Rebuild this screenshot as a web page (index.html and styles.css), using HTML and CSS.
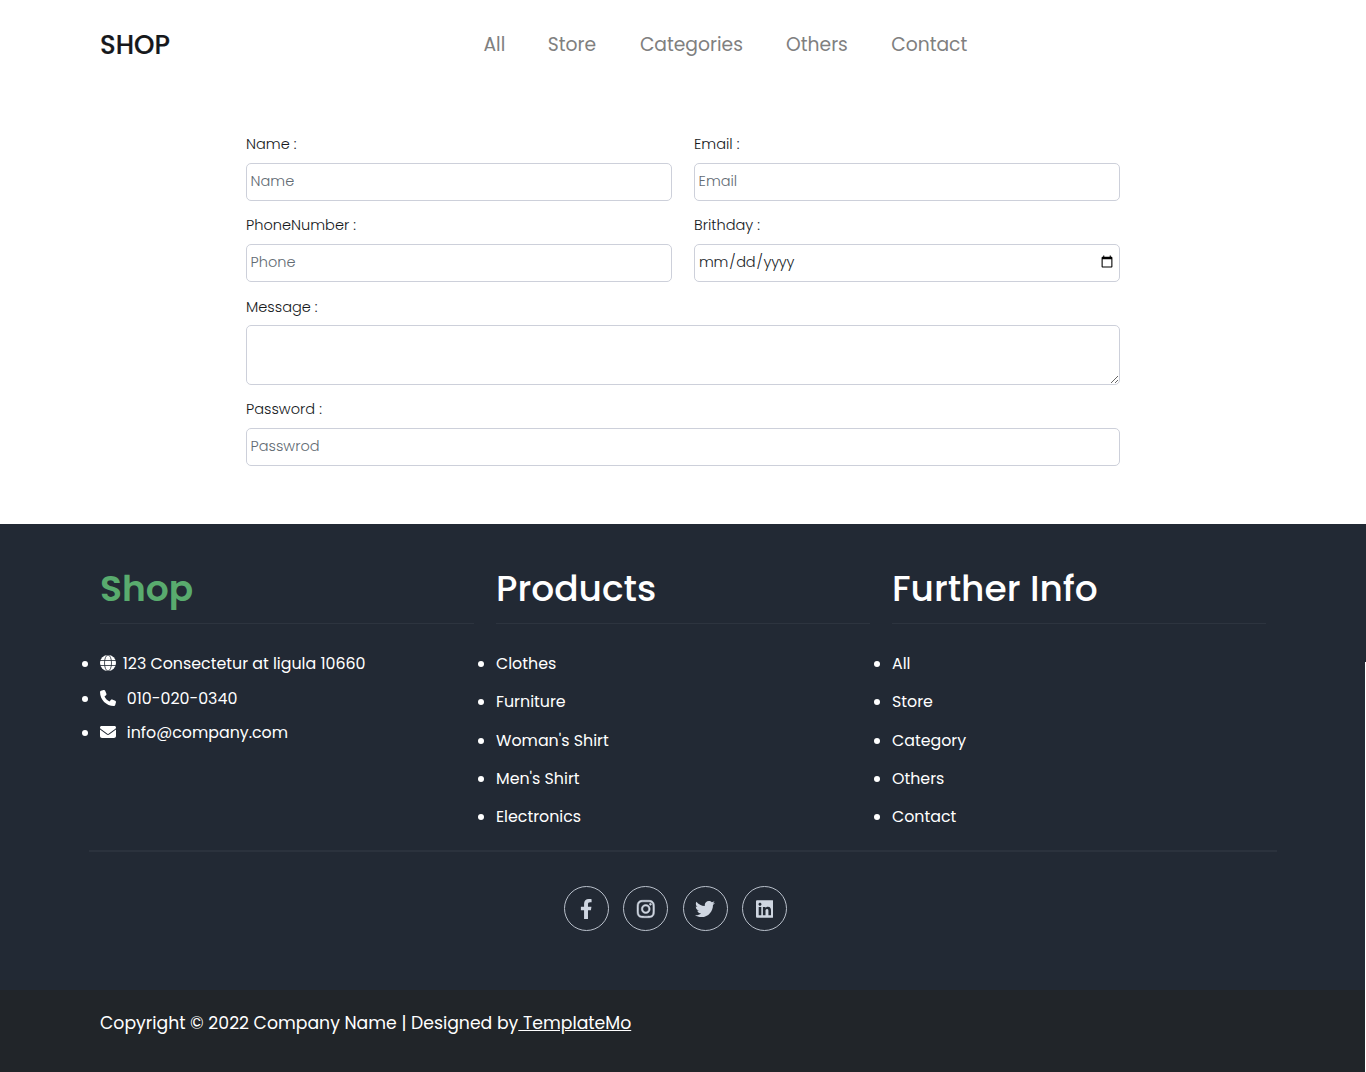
FILE: index.html
```html
<!DOCTYPE html>
<html lang="en">
<head>
<meta charset="utf-8">
<title>Shop - Contact</title>
<link rel="stylesheet" href="styles.css">
</head>
<body>
<header class="header">
  <a class="brand">SHOP</a>
  <nav class="nav"><a class="nav-all">All</a><a class="nav-store">Store</a><a class="nav-categories">Categories</a><a class="nav-others">Others</a><a class="nav-contact">Contact</a></nav>
</header>
<main>
  <form class="form">
    <div class="field"><label for="name">Name :</label><input id="name" type="text" placeholder="Name"></div>
    <div class="field"><label for="email">Email :</label><input id="email" type="email" placeholder="Email"></div>
    <div class="field"><label for="phone">PhoneNumber :</label><input id="phone" type="text" placeholder="Phone"></div>
    <div class="field"><label for="date">Brithday :</label><input id="date" type="date"></div>
    <div class="field wide message"><label for="message">Message :</label><textarea id="message"></textarea></div>
    <div class="field wide"><label for="password">Password :</label><input id="password" type="password" placeholder="Passwrod"></div>
  </form>
</main>
<footer class="footer">
  <div class="columns">
    <section class="column">
      <h2 class="title green">Shop</h2>
      <ul class="contact">
        <li><svg class="icon" viewBox="0 0 16 16"><circle cx="8" cy="8" r="8" fill="#fff"/><path d="M0 5.500h16M0 10.500h16" fill="none" stroke="#222934" stroke-width=".8"/><ellipse cx="8" cy="8" rx="3.500" ry="8" fill="none" stroke="#222934" stroke-width=".8"/></svg><span class="address">123 Consectetur at ligula 10660</span></li>
        <li><svg class="icon" viewBox="0 0 512 512"><path fill="#fff" d="M164.900 24.600c-7.700-18.600-28-28.500-47.400-23.200l-88 24C12.100 30.200 0 46 0 64c0 247.400 200.600 448 448 448 18 0 33.800-12.100 38.600-29.500l24-88c5.300-19.400-4.600-39.700-23.200-47.400l-96-40c-16.300-6.800-35.200-2.100-46.300 11.600L304.700 368C234.300 334.700 177.300 277.700 144 207.300L193.300 167c13.700-11.200 18.400-30 11.600-46.300l-40-96z"/></svg><span class="phone">010-020-0340</span></li>
        <li><svg class="icon" viewBox="0 0 512 512"><path fill="#fff" d="M48 64C21.500 64 0 85.500 0 112c0 15.100 7.100 29.300 19.200 38.400L236.800 313.600c11.400 8.500 27 8.500 38.400 0L492.800 150.400c12.100-9.100 19.200-23.300 19.200-38.400 0-26.500-21.500-48-48-48H48zM0 176v208c0 35.300 28.700 64 64 64h384c35.300 0 64-28.700 64-64V176L294.400 339.200c-22.800 17.100-54 17.100-76.800 0L0 176z"/></svg><span class="mail">info@company.com</span></li>
      </ul>
    </section>
    <section class="column">
      <h2 class="title products">Products</h2>
      <ul class="links"><li>Clothes</li><li>Furniture</li><li>Woman's Shirt</li><li>Men's Shirt</li><li>Electronics</li></ul>
    </section>
    <section class="column">
      <h2 class="title info">Further Info</h2>
      <ul class="links"><li>All</li><li>Store</li><li>Category</li><li>Others</li><li>Contact</li></ul>
    </section>
  </div>
  <div class="divider"></div>
  <div class="social">
    <a><svg viewBox="0 0 320 512"><path d="M279.140 288l14.220-92.660h-88.910v-60.130c0-25.350 12.420-50.060 52.240-50.060h40.420V6.260S260.430 0 225.360 0c-73.220 0-121.080 44.380-121.080 124.720v70.620H22.890V288h81.390v224h100.170V288z"/></svg></a>
    <a><svg class="instagram" viewBox="0 0 448 512"><path d="M224.100 141c-63.600 0-114.900 51.300-114.900 114.900s51.300 114.900 114.900 114.900S339 319.500 339 255.900 287.700 141 224.100 141zm0 189.600c-41.100 0-74.700-33.500-74.700-74.700s33.500-74.700 74.700-74.700 74.700 33.500 74.700 74.700-33.600 74.700-74.700 74.700zm146.400-194.300c0 14.900-12 26.800-26.800 26.800-14.900 0-26.800-12-26.800-26.800s12-26.800 26.800-26.800 26.800 12 26.800 26.800zm76.100 27.200c-1.700-35.900-9.900-67.700-36.200-93.900-26.200-26.200-58-34.400-93.900-36.200-37-2.100-147.900-2.100-184.900 0-35.800 1.700-67.600 9.900-93.900 36.100s-34.400 58-36.200 93.900c-2.100 37-2.100 147.900 0 184.900 1.700 35.900 9.900 67.700 36.200 93.900s58 34.400 93.900 36.200c37 2.100 147.900 2.100 184.900 0 35.900-1.700 67.700-9.900 93.900-36.200 26.200-26.200 34.400-58 36.200-93.900 2.100-37 2.100-147.800 0-184.800zM398.800 388c-7.800 19.600-22.900 34.700-42.600 42.600-29.500 11.700-99.500 9-132.100 9s-102.700 2.600-132.100-9c-19.600-7.800-34.700-22.900-42.600-42.600-11.700-29.500-9-99.500-9-132.100s-2.600-102.700 9-132.100c7.800-19.600 22.900-34.700 42.600-42.600 29.500-11.700 99.500-9 132.100-9s102.700-2.600 132.100 9c19.600 7.800 34.700 22.900 42.600 42.600 11.700 29.500 9 99.500 9 132.100s2.700 102.700-9 132.100z"/></svg></a>
    <a><svg viewBox="0 0 512 512"><path d="M459.370 151.716c.325 4.548.325 9.097.325 13.645 0 138.720-105.583 298.558-298.558 298.558-59.452 0-114.680-17.219-161.137-47.106 8.447.974 16.568 1.299 25.340 1.299 49.055 0 94.213-16.568 130.274-44.832-46.132-.975-84.792-31.188-98.112-72.772 6.498.974 12.995 1.624 19.818 1.624 9.421 0 18.843-1.300 27.614-3.573-48.081-9.747-84.143-51.980-84.143-102.985v-1.299c13.969 7.797 30.214 12.670 47.431 13.319-28.264-18.843-46.781-51.005-46.781-87.391 0-19.492 5.197-37.360 14.294-52.954 51.655 63.675 129.300 105.258 216.365 109.807-1.624-7.797-2.599-15.918-2.599-24.040 0-57.828 46.782-104.934 104.934-104.934 30.213 0 57.502 12.670 76.670 33.137 23.715-4.548 46.456-13.320 66.599-25.340-7.798 24.366-24.366 44.833-46.132 57.827 21.117-2.273 41.584-8.122 60.426-16.243-14.292 20.791-32.161 39.308-52.628 54.253z"/></svg></a>
    <a><svg viewBox="0 0 448 512"><path d="M416 32H31.900C14.300 32 0 46.500 0 64.300v383.400C0 465.500 14.300 480 31.900 480H416c17.600 0 32-14.500 32-32.300V64.300c0-17.800-14.400-32.300-32-32.300zM135.400 416H69V202.200h66.500V416zm-33.200-243c-21.300 0-38.500-17.300-38.500-38.500S80.900 96 102.200 96c21.200 0 38.500 17.300 38.500 38.500 0 21.300-17.200 38.500-38.500 38.500zm282.100 243h-66.400V312c0-24.800-.5-56.700-34.500-56.700-34.600 0-39.900 27-39.900 54.900V416h-66.400V202.200h63.700v29.200h.9c8.900-16.800 30.600-34.500 62.900-34.500 67.200 0 79.700 44.300 79.700 101.900V416z"/></svg></a>
  </div>
  <div class="bottom"><p>Copyright © 2022 Company Name | Designed by<a> TemplateMo</a></p></div>
</footer>
</body>
</html>
```

FILE: styles.css
```css
* { box-sizing: border-box; }
body { margin: 0; background: #fff; color: #212529; font-family: Poppins, Inter, sans-serif; font-weight: 300; }
.header { height: 90px; padding: 0 100px; display: flex; align-items: center; }
.brand { width: 383.500px; color: #16181b; font-size: 26px; font-weight: 500; -webkit-text-stroke: .2px #16181b; }
.nav { display: flex; gap: 43.200px; padding-bottom: 2px; color: #808080; font-size: 18.720px; font-weight: 400; white-space: nowrap; }
.nav-all { width: 21px; }
.nav-store { width: 49px; }
.nav-categories { width: 103px; }
.nav-others { width: 62px; }
.form { width: 874px; margin: 0 auto; padding-top: 43px; height: 434px; display: grid; grid-template-columns: 1fr 1fr; column-gap: 22px; grid-template-rows: 81px 81px 103px 81px; }
.wide { grid-column: 1 / 3; }
.field { display: flex; flex-direction: column; }
label { font-size: 14.550px; line-height: 22px; margin-bottom: 8px; color: #16191c; }
.message label { padding-top: 1px; margin-bottom: 7px; }
input, textarea { display: block; width: 100%; height: 38px; border: 1px solid #ced4da; border-color: #cdd0da; border-radius: 5px; background: #fff; padding: 0 3.600px 2px; font: inherit; font-size: 14.500px; color: #212529; }
textarea { height: 60px; }
input::placeholder { color: #626b73; }
#date { padding: 0 3px 1px; letter-spacing: -.25px; }
.footer { position: relative; background: #222934; color: #fff; height: 548px; display: flex; flex-direction: column; font-weight: 400; }
.footer::after { content: ""; position: absolute; top: 138px; right: 0; bottom: 0; width: 1px; background: #fff; }
.columns { height: 326px; padding: 42px 100px 0; display: grid; grid-template-columns: repeat(3, 374px); column-gap: 22px; }
.title { margin: 0; height: 58px; line-height: 45px; border-bottom: 1px solid #2d343f; font-size: 36px; font-weight: 500; }
.green { color: #59ab6e; font-weight: 600; }
ul { margin: 21.300px 0 0; padding: 0; font-size: 15.840px; }
.links li { height: 38.200px; line-height: 38.200px; }
.contact li { height: 34.500px; line-height: 38.200px; }
.icon { width: 16px; height: 16px; vertical-align: -2px; margin-right: 6.800px; }
.phone, .mail { margin-left: 4px; }
.divider { height: 2px; margin: 0 89px; background: #2b323d; }
.social { display: flex; gap: 14.300px; padding: 34px 0 0 564px; height: 138px; }
.social a { width: 45px; height: 45px; border: 1px solid #b9c0cb; border-radius: 50%; display: flex; align-items: center; justify-content: center; }
.social svg { height: 20px; fill: #cfd6e1; }
.social .instagram { stroke: #cfd6e1; stroke-width: 12; overflow: visible; }
.bottom { flex: 1; background: #212529; padding: 19px 100px; }
.bottom p { margin: 0; font-size: 17.280px; line-height: 28px; }
.bottom a { text-decoration: underline; }
```
